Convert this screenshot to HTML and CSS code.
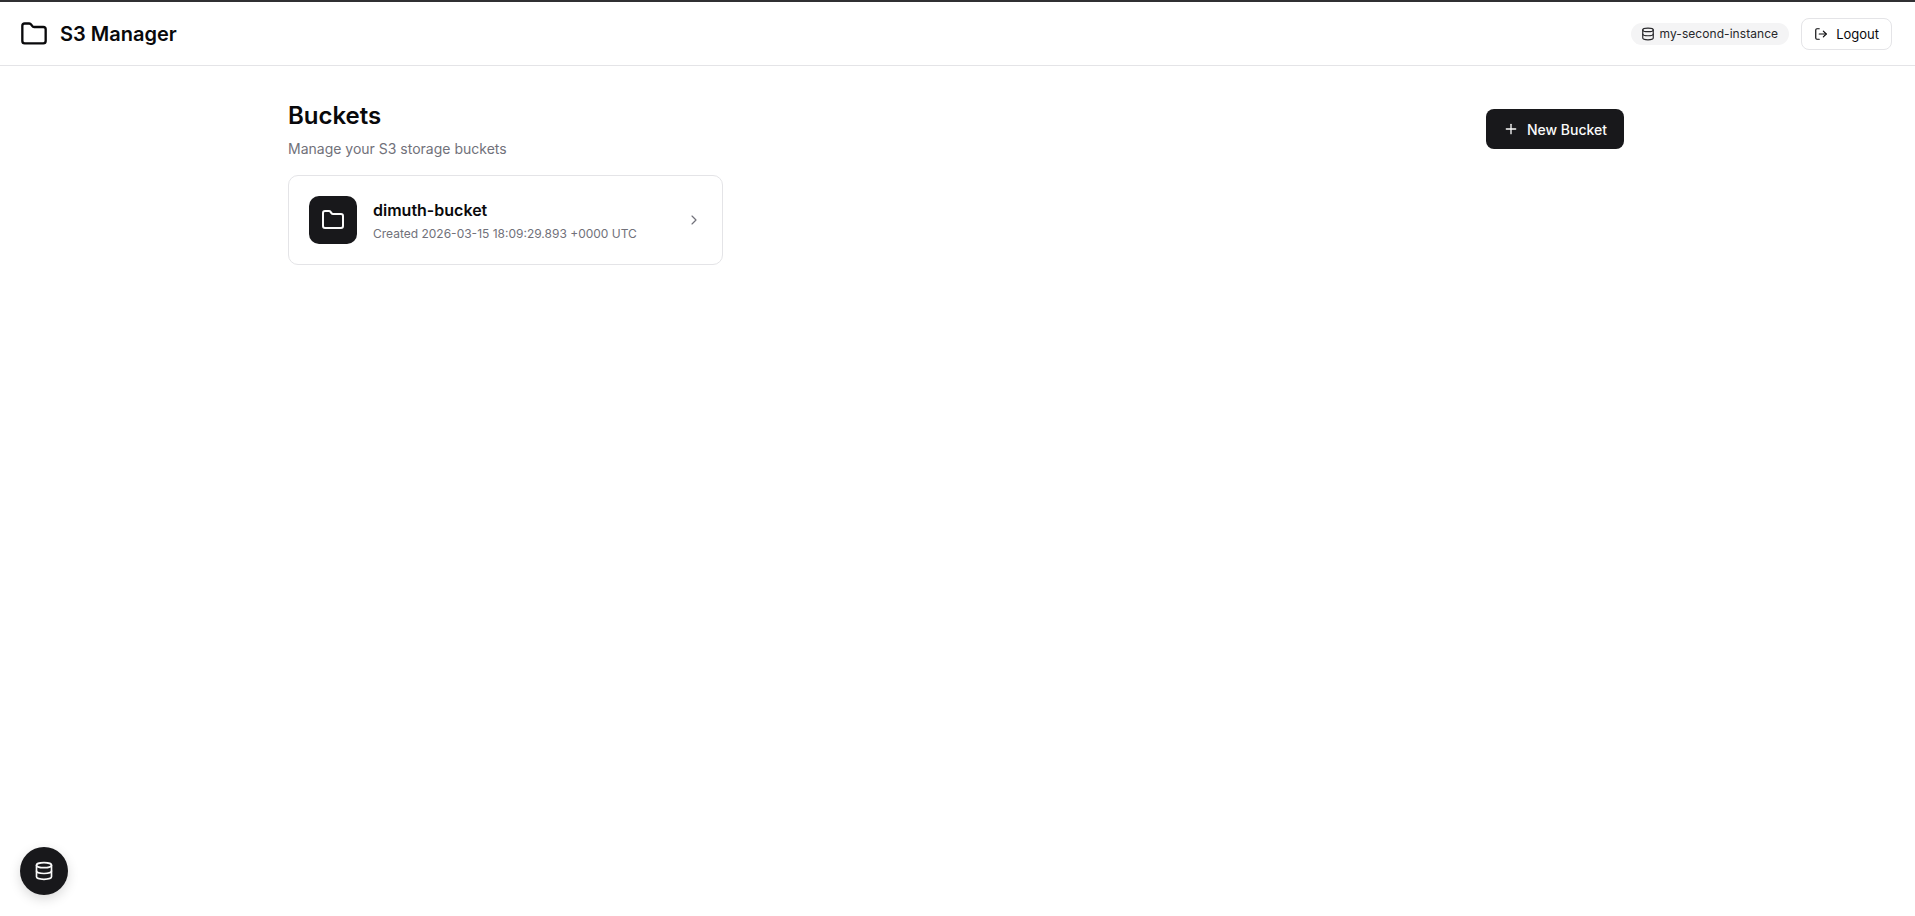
FILE: index.html
```html
<!DOCTYPE html>
<html lang="en">
<head>
  <meta charset="UTF-8">
  <meta name="viewport" content="width=device-width, initial-scale=1.0">
  <title>S3 Manager</title>
  <link rel="stylesheet" href="styles.css">
</head>
<body>
  <header class="topbar">
    <div class="brand">
      <svg class="brand-icon" viewBox="0 0 24 24"><path d="M20 20a2 2 0 0 0 2-2V8a2 2 0 0 0-2-2h-7.9a2 2 0 0 1-1.69-.9L9.6 3.9A2 2 0 0 0 7.93 3H4a2 2 0 0 0-2 2v13a2 2 0 0 0 2 2Z"/></svg>
      <span class="brand-name">S3 Manager</span>
    </div>
    <div class="topbar-right">
      <div class="instance">
        <svg class="icon-14" viewBox="0 0 24 24"><ellipse cx="12" cy="5" rx="9" ry="3"/><path d="M3 5v14a9 3 0 0 0 18 0V5"/><path d="M3 12a9 3 0 0 0 18 0"/></svg>
        <span>my-second-instance</span>
      </div>
      <button class="logout">
        <svg class="icon-14" viewBox="0 0 24 24"><path d="M9 21H5a2 2 0 0 1-2-2V5a2 2 0 0 1 2-2h4"/><polyline points="16 17 21 12 16 7"/><line x1="21" y1="12" x2="9" y2="12"/></svg>
        <span>Logout</span>
      </button>
    </div>
  </header>

  <main class="container">
    <div class="page-head">
      <div>
        <h1>Buckets</h1>
        <p class="subtitle">Manage your S3 storage buckets</p>
      </div>
      <button class="new-bucket">
        <svg class="icon-16" viewBox="0 0 24 24"><path d="M5 12h14"/><path d="M12 5v14"/></svg>
        <span>New Bucket</span>
      </button>
    </div>

    <div class="bucket-grid">
      <a class="bucket-card">
        <div class="bucket-thumb">
          <svg class="icon-24" viewBox="0 0 24 24"><path d="M20 20a2 2 0 0 0 2-2V8a2 2 0 0 0-2-2h-7.9a2 2 0 0 1-1.69-.9L9.6 3.9A2 2 0 0 0 7.93 3H4a2 2 0 0 0-2 2v13a2 2 0 0 0 2 2Z"/></svg>
        </div>
        <div class="bucket-info">
          <div class="bucket-name">dimuth-bucket</div>
          <div class="bucket-date">Created 2026-03-15 18:09:29.893 +0000 UTC</div>
        </div>
        <svg class="chevron" viewBox="0 0 24 24"><path d="m9 18 6-6-6-6"/></svg>
      </a>
    </div>
  </main>

  <button class="fab">
    <svg class="icon-20" viewBox="0 0 24 24"><ellipse cx="12" cy="5" rx="9" ry="3"/><path d="M3 5v14a9 3 0 0 0 18 0V5"/><path d="M3 12a9 3 0 0 0 18 0"/></svg>
  </button>
</body>
</html>
```

FILE: styles.css
```css
body {
  margin: 0;
  min-height: 916px;
  box-sizing: border-box;
  border-top: 2px solid #303033;
  font-family: Inter, "Noto Sans", sans-serif;
  color: #09090b;
  background-color: #fff;
}

svg {
  fill: none;
  stroke: currentColor;
  stroke-width: 2;
  stroke-linecap: round;
  stroke-linejoin: round;
  flex-shrink: 0;
}

button {
  font-family: inherit;
  cursor: pointer;
}

.icon-14 { width: 14px; height: 14px; }
.icon-16 { width: 16px; height: 16px; }
.icon-20 { width: 20px; height: 20px; }
.icon-24 { width: 24px; height: 24px; }

/* top bar */
.topbar {
  height: 63px;
  padding: 0 23px 0 20px;
  display: flex;
  align-items: center;
  justify-content: space-between;
  border-bottom: 1px solid #e4e4e7;
}

.brand {
  display: flex;
  align-items: center;
  gap: 12px;
}

.brand-icon {
  width: 28px;
  height: 28px;
}

.brand-name {
  font-size: 20px;
  font-weight: 600;
  line-height: 28px;
}

.topbar-right {
  display: flex;
  align-items: center;
  gap: 12px;
}

.instance {
  display: flex;
  align-items: center;
  gap: 5px;
  height: 22px;
  padding: 0 11px 0 10px;
  border-radius: 11px;
  background-color: #f4f4f5;
  font-size: 12px;
  letter-spacing: 0.06px;
  color: #27272a;
}

.logout {
  display: flex;
  align-items: center;
  gap: 8px;
  height: 32px;
  padding: 0 12px;
  border: 1px solid #e4e4e7;
  border-radius: 8px;
  background-color: #fff;
  font-size: 13px;
  font-weight: 400;
  color: #09090b;
}

/* page */
.container {
  width: 1336px;
  margin-left: 288px;
  padding-top: 34px;
}

.page-head {
  display: flex;
  align-items: center;
  justify-content: space-between;
  margin-bottom: 16px;
}

h1 {
  margin: 0;
  font-size: 24px;
  font-weight: 600;
  line-height: 32px;
}

.subtitle {
  margin: 7px 0 0;
  font-size: 14px;
  line-height: 20px;
  color: #71717a;
}

.new-bucket {
  display: flex;
  align-items: center;
  gap: 8px;
  height: 40px;
  padding: 0 17px;
  margin-bottom: 1px;
  border: none;
  border-radius: 8px;
  background-color: #18181b;
  color: #fafafa;
  font-size: 14px;
  font-weight: 500;
}

.bucket-grid {
  display: grid;
  grid-template-columns: 435px;
}

.bucket-card {
  display: flex;
  align-items: center;
  gap: 16px;
  height: 90px;
  box-sizing: border-box;
  padding: 0 20px;
  border: 1px solid #e4e4e7;
  border-radius: 10px;
}

.bucket-thumb {
  width: 48px;
  height: 48px;
  border-radius: 10px;
  background-color: #18181b;
  color: #fafafa;
  display: flex;
  align-items: center;
  justify-content: center;
}

.bucket-info {
  flex: 1;
}

.bucket-name {
  font-size: 16px;
  font-weight: 600;
  line-height: 24px;
}

.bucket-date {
  margin-top: 4px;
  font-size: 12px;
  line-height: 16px;
  color: #71717a;
}

.chevron {
  width: 16px;
  height: 16px;
  color: #71717a;
  stroke-width: 1.75;
}

/* floating button */
.fab {
  position: fixed;
  left: 20px;
  bottom: 21px;
  width: 48px;
  height: 48px;
  border: none;
  border-radius: 50%;
  background-color: #18181b;
  color: #fafafa;
  display: flex;
  align-items: center;
  justify-content: center;
  box-shadow: 0 4px 12px rgba(0, 0, 0, 0.15);
}
```
